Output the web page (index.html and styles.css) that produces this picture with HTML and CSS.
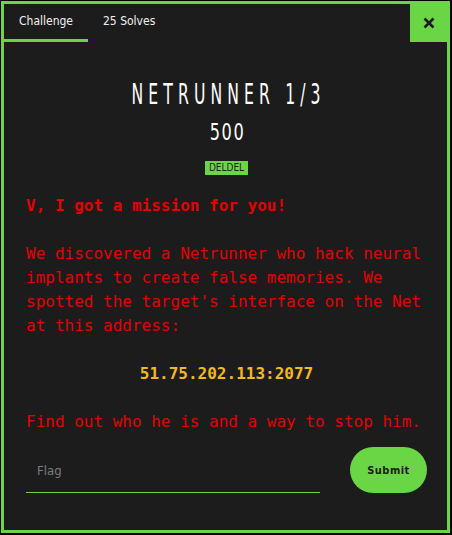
FILE: index.html
```html
<!DOCTYPE html>
<html>
<head>
<meta charset="utf-8">
<link rel="stylesheet" href="styles.css">
</head>
<body>
<div class="modal">
  <div class="header">
    <div class="tab active">Challenge</div>
    <div class="tab">25 Solves</div>
    <div class="close">
      <svg width="12" height="12" viewBox="0 0 12 12"><path d="M1.5 1.5 L10.5 10.5 M10.5 1.5 L1.5 10.5" stroke="#1c1c1c" stroke-width="2.6" fill="none"/></svg>
    </div>
  </div>
  <div class="body">
    <h1 class="title"><span class="title-text">NETRUNNER 1/3</span></h1>
    <div class="points"><span class="points-text">500</span></div>
    <div class="tags"><span class="tag">DELDEL</span></div>
    <div class="desc">
      <p class="bold">V, I got a mission for you!</p>
      <p>We discovered a Netrunner who hack neural implants to create false memories. We spotted the target's interface on the Net at this address:</p>
      <p class="addr">51.75.202.113:2077</p>
      <p class="last">Find out who he is and a way to stop him.</p>
    </div>
    <div class="form">
      <div class="field"><span class="placeholder">Flag</span></div>
      <button class="submit">Submit</button>
    </div>
  </div>
</div>
</body>
</html>
```
FILE: styles.css
```css
html, body {
  margin: 0;
  padding: 0;
  background: #000;
}
body {
  width: 452px;
  height: 535px;
  padding: 1px 0 0 1px;
  box-sizing: border-box;
}
.modal {
  width: 449px;
  height: 532px;
  box-sizing: border-box;
  border: 3px solid #6bd645;
  background: #1c1c1c;
  font-family: "DejaVu Sans Condensed", "DejaVu Sans", sans-serif;
  color: #fff;
}
.header {
  display: flex;
  height: 38px;
}
.tab {
  padding: 0 15px;
  font-size: 12px;
  line-height: 36px;
  border-bottom: 3px solid transparent;
  margin-top: -1px;
  color: #f0f0f0;
}
.tab.active {
  border-bottom-color: #6bd645;
}
.close {
  margin-left: auto;
  width: 37px;
  height: 41px;
  margin-top: -3px;
  background: #6bd645;
  display: flex;
  align-items: center;
  justify-content: center;
  padding-top: 2px;
  box-sizing: border-box;
}
.body {
  padding: 0 20px 0 22px;
}
.title {
  margin: 34px 0 0;
  text-align: center;
  font-weight: normal;
  font-size: 29px;
  line-height: 36px;
}
.title-text {
  display: inline-block;
  letter-spacing: 8.5px;
  padding-left: 8.5px;
  transform: scaleX(0.6);
  white-space: nowrap;
}
.points {
  text-align: center;
  font-size: 23px;
  line-height: 28px;
  margin-top: 6px;
}
.points-text {
  display: inline-block;
  letter-spacing: 2px;
  padding-left: 2px;
  transform: scaleX(0.78);
}
.tags {
  text-align: center;
  margin-top: 13px;
  line-height: 14px;
  height: 14px;
}
.tag {
  display: inline-block;
  background: #6bd645;
  color: #1c1c1c;
  font-size: 10px;
  line-height: 14px;
  padding: 0 4px;
}
.desc {
  margin-top: 21px;
  font-family: "DejaVu Sans Mono", monospace;
  font-size: 16px;
  line-height: 24px;
  color: #e60000;
}
.desc p {
  margin: 0 0 24px;
}
.desc p.last {
  margin-bottom: 13px;
}
.desc .bold {
  font-weight: bold;
}
.desc .addr {
  text-align: center;
  font-weight: bold;
  color: #f5b820;
}
.form {
  display: flex;
  align-items: center;
  justify-content: space-between;
}
.field {
  width: 294px;
  height: 44px;
  border-bottom: 1px solid #6bd645;
  display: flex;
  align-items: center;
  padding-left: 11px;
  box-sizing: border-box;
  margin-top: 2px;
}
.placeholder {
  color: #7d7d7d;
  font-size: 13px;
}
.submit {
  width: 77px;
  height: 46px;
  border: 0;
  border-radius: 23px;
  background: #6bd645;
  color: #1c1c1c;
  font-family: "DejaVu Sans Condensed", "DejaVu Sans", sans-serif;
  font-weight: bold;
  font-size: 11px;
  letter-spacing: 0.5px;
  padding: 0;
}
```
